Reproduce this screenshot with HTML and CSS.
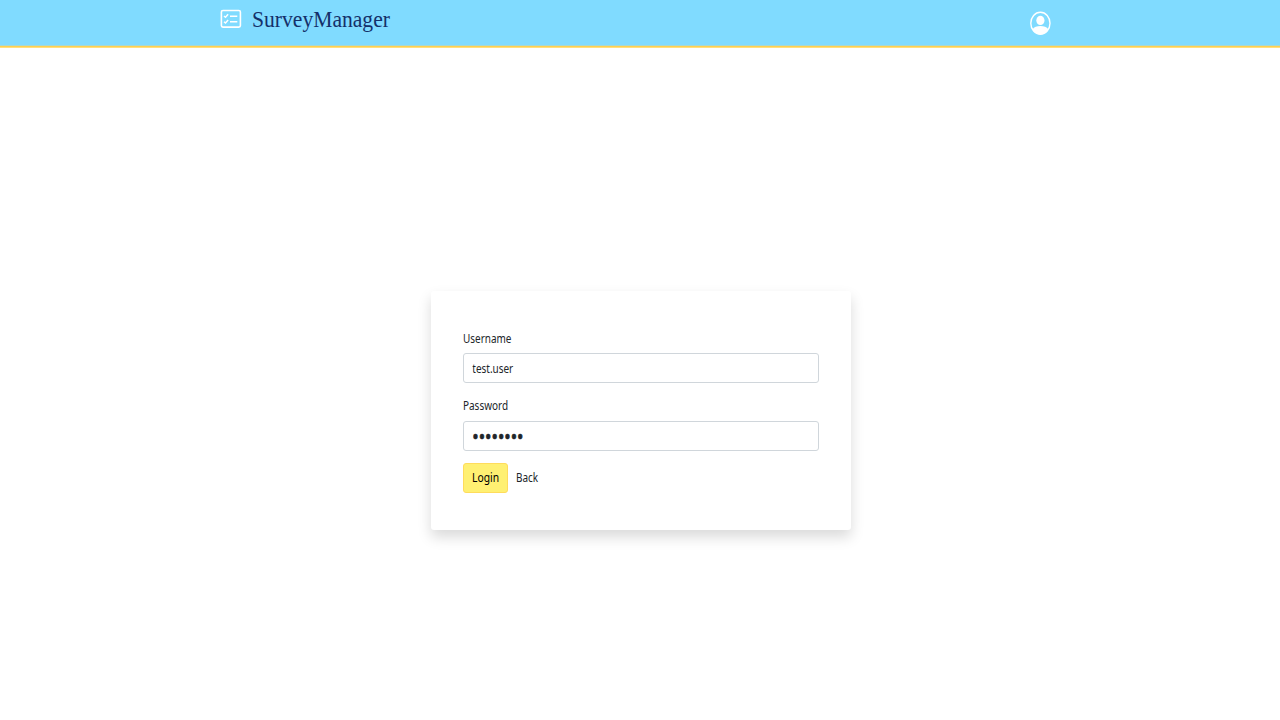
FILE: index.html
```html
<!DOCTYPE html>
<html lang="en">
<head>
<meta charset="utf-8">
<title>SurveyManager</title>
<link rel="stylesheet" href="styles.css">
</head>
<body>
<header class="navbar">
  <a class="brand">
    <svg class="brand-icon" width="22" height="20" viewBox="0 0 22 20" fill="none" stroke="#fff">
      <rect x="1.4" y="1.5" width="19" height="16.6" rx="1.6" stroke-width="1.6"/>
      <path d="M4 7l1.500 1.300 2.600-3M4 12.700l1.500 1.300 2.600-3" stroke-width="1.5"/>
      <path d="M10 7.200h7.300M10 12.700h7.300" stroke-width="1.5"/>
    </svg>
    <span class="brand-name">SurveyManager</span>
  </a>
  <svg class="avatar" width="22" height="24" viewBox="0 0 22 24">
    <ellipse cx="11.4" cy="12.2" rx="9.6" ry="11" fill="none" stroke="#fff" stroke-width="1.4"/>
    <ellipse cx="11.4" cy="9.4" rx="4.1" ry="4.6" fill="#fff"/>
    <path d="M3.400 18.400C5.100 15.600 7.900 15 11.400 15s6.300.6 8 3.400C17.500 21.500 14.600 23.200 11.400 23.200s-6.100-1.700-8-4.800z" fill="#fff"/>
  </svg>
</header>
<main class="page">
  <form class="card">
    <label class="label label-user" for="user"><span class="narrow">Username</span></label>
    <div class="field"><input class="input" id="user" type="text" value="test.user"></div>
    <label class="label" for="pass"><span class="narrow">Password</span></label>
    <div class="field"><input class="input password" id="pass" type="password" value="password"></div>
    <div class="actions">
      <button class="login" type="button"><span class="narrow login-text">Login</span></button>
      <a class="back"><span class="narrow">Back</span></a>
    </div>
  </form>
</main>
</body>
</html>
```
FILE: styles.css
```css
* { box-sizing: border-box; }
body { margin: 0; height: 720px; overflow: hidden; background: #fff; color: #212529; font: 12px/18px "Noto Sans", sans-serif; display: flex; flex-direction: column; }
.navbar { height: 48px; flex: none; background: linear-gradient(#80dbff 45px, #a8d8d0 45px, #a8d8d0 46px, #ffd04f 46px, #ffd04f 47px, #ffdf80 47px); padding: 0 229px 0 220px; display: flex; justify-content: space-between; align-items: flex-start; }
.brand { display: flex; color: #14306a; }
.brand-icon { margin-top: 9px; }
.brand-name { margin: 5px 0 0 10px; font: 24px/28px "Liberation Serif", serif; transform: scaleX(.9); transform-origin: 0 0; }
.avatar { margin-top: 11px; }
.page { padding: 243px 0 0 431px; }
.card { width: 420px; height: 239px; padding: 38px 32px 0; background: #fff; border-radius: 3px; box-shadow: 0 7px 14px rgba(0,0,0,.15); }
.label { display: block; height: 18px; margin-bottom: 6px; }
.label-user { padding-top: 1px; }
.narrow { display: inline-block; transform: scaleX(.83); transform-origin: 0 50%; }
.login-text { transform: scaleX(.86); }
.field { height: 30px; width: 356px; margin-bottom: 13.500px; border: 1px solid #d0d6db; border-radius: 3px; overflow: hidden; }
.input { display: block; width: 120%; height: 28px; padding: 1px 10px 0; border: 0; outline: 0; background: transparent; color: #212529; font: inherit; transform: scaleX(.83); transform-origin: 0 50%; }
.password { font-size: 20.500px; line-height: 24px; padding: 0 10px; -webkit-text-stroke: .7px #212529; }
.actions { display: flex; align-items: center; gap: 8px; margin-top: -1.500px; }
.login { width: 45px; height: 30px; padding: 0 0 0 8px; text-align: left; background: #fff072; color: #000; border: 1px solid #ffdc5c; border-radius: 3px; font: inherit; }
.back { color: #212529; }
```
